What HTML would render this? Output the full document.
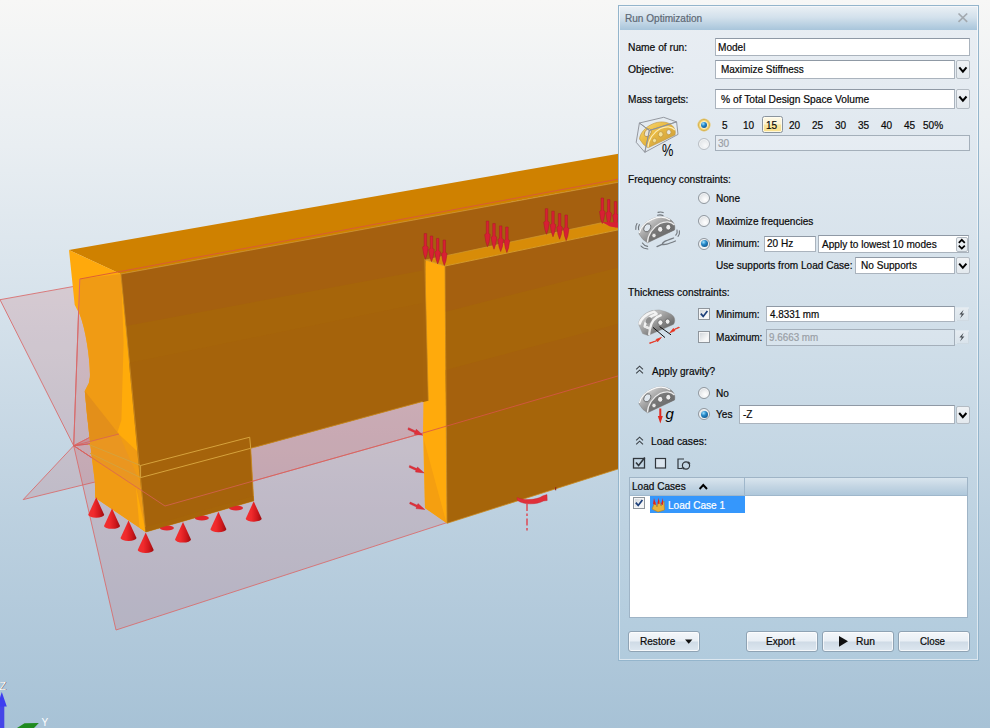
<!DOCTYPE html>
<html><head><meta charset="utf-8"><title>Run Optimization</title>
<style>
html,body{margin:0;padding:0;}
body{width:990px;height:728px;overflow:hidden;position:relative;font-family:"Liberation Sans",sans-serif;font-size:11px;color:#000;background:#a9c3d6;}
#scene{position:absolute;left:0;top:0;width:990px;height:728px;}
#dlg{position:absolute;left:618px;top:5px;width:359px;height:654px;border:1px solid #94b5cc;background:linear-gradient(#e9eef3 0px,#e6ecf2 60px,#d3e0ea 300px,#bdd2e1 520px,#b1cbdd 654px);box-shadow:inset 0 0 0 1px rgba(255,255,255,.55);}
#ttl{position:absolute;left:620px;top:7px;width:357px;height:23px;background:linear-gradient(#e9eff4,#d3e1ec 45%,#a8c5db);}
.t{position:absolute;white-space:nowrap;-webkit-text-stroke:0.22px currentColor;transform:scaleX(.915);transform-origin:0 0;line-height:13px;font-size:11px;color:#0a0a0a;}
.g{color:#9a9fa6;}
.in{position:absolute;box-sizing:border-box;background:#fff;border:1px solid #aab3bd;border-top-color:#8f99a5;}
.dis{background:rgba(255,255,255,.2);border-color:#a4afba;}
.db{position:absolute;box-sizing:border-box;border:1px solid #b3bbc3;border-radius:2px;background:linear-gradient(#eff2f5,#e3e9ee);}
.db svg{position:absolute;left:0;top:0;}
.btn{position:absolute;box-sizing:border-box;height:20.4px;border:1px solid #8fa3b4;border-radius:3px;background:linear-gradient(#f4f7fa 0%,#e9eff5 48%,#cfdbe6 52%,#dde7f0 100%);box-shadow:inset 0 0 0 1px rgba(255,255,255,.7);}
.rd{position:absolute;width:12px;height:12px;border-radius:50%;box-sizing:border-box;border:1px solid #90979e;background:radial-gradient(circle at 62% 66%,#ffffff 0%,#f1f2f3 35%,#cdd1d5 100%);box-shadow:inset 0 0 0 1px rgba(244,246,248,.9);}
.rd.on::after{content:"";position:absolute;left:1.5px;top:1.5px;width:7px;height:7px;border-radius:50%;background:radial-gradient(circle at 36% 30%,#9fe2ff 0%,#2588c8 38%,#0b3f6e 100%);}
.rd.hot{border-color:#d9b145;background:radial-gradient(circle at 50% 50%,#fff 0%,#fff 40%,#f6dc86 58%,#efc956 100%);box-shadow:0 0 0 0.5px #e9c45c;}.rd.hot.on::after{left:2px;top:2px;width:6px;height:6px;}.rd.off{border-color:#b9bec4;background:radial-gradient(circle at 62% 66%,#f8f9fa 0%,#eceef0 40%,#dadde0 100%);}
.cb{position:absolute;width:12px;height:12px;box-sizing:border-box;border:1px solid #8e959c;background:linear-gradient(135deg,#ccd2d7,#f6f7f8 70%);box-shadow:inset 0 0 0 1px #f4f5f6;}
.cb svg{position:absolute;left:0;top:0;}

</style></head><body>
<svg id="scene" width="990" height="728" viewBox="0 0 990 728">
<defs>
<linearGradient id="bg" x1="0" y1="0" x2="0" y2="1">
<stop offset="0" stop-color="#f7f7f6"/><stop offset="0.2" stop-color="#e9eef2"/><stop offset="0.45" stop-color="#d3e0ea"/><stop offset="0.7" stop-color="#bdd1e0"/><stop offset="1" stop-color="#a7c2d6"/>
</linearGradient>
</defs>
<rect width="990" height="728" fill="url(#bg)"/>
<defs>
<linearGradient id="cone" x1="0" y1="0" x2="1" y2="0"><stop offset="0" stop-color="#f03030"/><stop offset="0.35" stop-color="#f02a2c"/><stop offset="0.7" stop-color="#d0181c"/><stop offset="1" stop-color="#9c0c10"/></linearGradient>
<g id="cn"><path d="M0,-0.5 L-8,17 A8,2.9 0 0 0 8,17 Z" fill="url(#cone)"/></g>
<g id="cb"><ellipse cx="0" cy="0" rx="7" ry="2.6" fill="#e0262a"/></g>
<g id="ar"><path d="M-1.25,0 L1.25,0 L1.25,12.5 L2.8,13.5 L1.6,21 L0,25.6 L-1.6,21 L-2.8,13.5 L-1.25,12.5 Z" fill="#d81f34" stroke="#a8182a" stroke-width="0.5"/></g>
<g id="sa"><path d="M0,0 L7,3.2 L7.8,1.6 L14.5,7.5 L5.8,6.6 L6.3,5 L-0.6,1.8 Z" fill="#e0303a" stroke="#c0202a" stroke-width="0.4"/></g>
</defs>
<!-- planes behind the model -->
<g stroke="#d96a6a" stroke-width="1" stroke-opacity="0.85">
<polygon points="0,299.7 300,245.7 300,420 73.7,445.7" fill="rgba(200,60,60,0.15)"/>
<polygon points="79.8,279 300,238.2 300,420 73.7,445.7" fill="rgba(200,60,60,0.10)"/>
<polygon points="73.7,445.7 23.2,499.6 95,482 110,470" fill="rgba(200,60,60,0.15)"/>
<polygon points="73.7,445.7 116,630 640,460 640,300 200,380" fill="rgba(200,70,80,0.17)"/>
<polygon points="73.7,445.7 165,506 640,371.8 640,300 200,380" fill="rgba(210,60,60,0.16)"/>
</g>
<!-- beam 1 -->
<polygon points="68.9,249.9 640,150 640,178.3 120.6,274" fill="#cf8100"/>
<path d="M69,250 L121,274 L145.7,532 L95.2,497.8 L94.9,482 L91.9,457.8 L86.9,413.4 L84.8,391 L88.9,383 L89.9,377 C90.5,362 86,330 79.8,314.8 L74.7,304.7 Z" fill="#ffa90c"/>
<!-- tinted part of end face -->
<path d="M79.8,279 L121,274 L145.7,532 L95.2,497.8 L94.9,482 L91.9,457.8 L86.9,413.4 L84.8,391 L88.9,383 L89.9,377 C90.5,362 86,330 79.8,314.8 L79,300 Z" fill="#f09b14"/>
<polygon points="84.8,391 119.2,434.6 89.9,441.6 86.9,413.4" fill="#e38f1a"/>
<polygon points="89.9,441.6 119.2,434.6 144,492 91.9,457.8" fill="#ea9620"/>
<polygon points="121.6,285 123.6,343 121.4,420 117.5,432 119.2,434.6 138,452 136.3,437 127.5,345 123.2,300" fill="#ffab0a"/>
<polygon points="136,487 145.7,532 139.5,527.8" fill="#ffab0a"/>
<line x1="79.8" y1="279" x2="640" y2="175.1" stroke="#d9583a" stroke-width="0.9"/>
<line x1="79.8" y1="279" x2="73.7" y2="445.7" stroke="#d96a6a" stroke-width="1"/>
<!-- front face beam1 -->
<polygon points="121,274 640,178.3 640,342.3 250.7,448.3 253.7,500.8 145.7,532" fill="#a6650a"/>
<polygon points="121,274 640,178.3 640,230 126,326" fill="#a5600f"/>
<polygon points="129,363 428,302 428,400 250.7,448.3 253.7,500.8 145.7,532 139,470" fill="#a5620c" opacity="0.7"/>
<polyline points="121,274 640,178.3" fill="none" stroke="#cf9630" stroke-width="0.8"/>
<polyline points="121,274 145.7,532 253.7,500.8 250.7,448.3 428,400" fill="none" stroke="#c98a20" stroke-width="0.8"/>
<!-- outline box on leg -->
<g fill="none" stroke="#d6a23c" stroke-width="1">
<polyline points="88,444.2 140.6,465.5 249.7,437.2 250.7,448.3 140.6,477.6 90,453.3"/>
<line x1="140.6" y1="465.5" x2="140.6" y2="477.6"/>
</g>
<!-- red plane lines over leg -->
<g fill="none" stroke="#d9605a" stroke-width="0.9" stroke-opacity="0.85">
<polyline points="73.7,445.7 165,506 423,433"/>
<line x1="73.7" y1="445.7" x2="119" y2="434"/>
</g>
<!-- block 2 -->
<polygon points="425.5,260 601.3,222.8 623,229 445,266" fill="#d88c08"/>
<polygon points="425.5,260 445,266 447,523.3 425,508 423,433" fill="#ffaa0c"/>
<polygon points="424,440 446.5,523 425,508" fill="#f59f10"/>
<polygon points="422.5,255 424.7,255 428.3,400.7 422.5,402.3" fill="#a6640c"/><line x1="424.7" y1="259" x2="428.3" y2="400.7" stroke="#c98a20" stroke-width="0.7"/>
<polygon points="445,266 640,225.3 640,462 447,523.3" fill="#a6650a"/>
<polygon points="445,266 640,225.3 640,262 445,312" fill="#a5600f"/>
<polygon points="445.6,370 640,318 640,369.5 446.2,426.3" fill="#a5610d"/>
<polyline points="425.5,260 445,266 640,225.3" fill="none" stroke="#d9a030" stroke-width="0.9"/><polyline points="425.5,260 601.3,222.8 623,229" fill="none" stroke="#cf9a30" stroke-width="0.7"/>
<polyline points="445,266 447,523.3 640,462" fill="none" stroke="#c98a20" stroke-width="0.8"/>
<line x1="423" y1="433" x2="640" y2="369.5" stroke="#d9544a" stroke-width="0.9" stroke-opacity="0.9"/>
<!-- supports -->
<use href="#cb" x="166.9" y="528"/><use href="#cb" x="201.8" y="518"/><use href="#cb" x="236" y="508"/>
<polygon points="145.7,532 253.7,500.8 253.4,496 145.3,527" fill="#a6650a"/>
<use href="#cn" x="96.2" y="497.8"/><use href="#cn" x="112" y="508.9"/><use href="#cn" x="128.5" y="521"/><use href="#cn" x="145.7" y="533"/>
<use href="#cn" x="183" y="522.6"/><use href="#cn" x="218.4" y="512.3"/><use href="#cn" x="253.7" y="501.8"/>
<!-- load arrows -->
<use href="#ar" x="425.4" y="233.6"/><use href="#ar" x="431.5" y="236"/><use href="#ar" x="437.7" y="238.4"/><use href="#ar" x="444.3" y="240"/>
<use href="#ar" x="487.5" y="221.1"/><use href="#ar" x="494" y="223.6"/><use href="#ar" x="500.7" y="225.9"/><use href="#ar" x="506.9" y="227"/>
<use href="#ar" x="546.5" y="208.7"/><use href="#ar" x="553" y="211.2"/><use href="#ar" x="559.6" y="213.6"/><use href="#ar" x="566.2" y="215"/>
<use href="#ar" x="602.3" y="198"/><use href="#ar" x="608.7" y="199.6"/><use href="#ar" x="615.5" y="201.6"/><use href="#ar" x="621.5" y="203.5"/><path d="M602,222 L619,222.5 L619,228 L610,226.5 Z" fill="#d81f34"/>
<use href="#sa" x="408.5" y="427.7"/><use href="#sa" x="409.7" y="465.4"/><use href="#sa" x="410.2" y="502"/>
<!-- moment -->
<path d="M517,497.5 C524,500.5 536,500.5 543,495.8 L547,494.6 L547.2,500.5 L543.5,501 C536,504.8 524,505 517.5,500.5 Z" fill="#e0303a" stroke="#c8202a" stroke-width="0.4"/>
<line x1="527" y1="504" x2="527" y2="533" stroke="#e0404a" stroke-width="1.4" stroke-dasharray="7,2.5,2.5,2.5"/>
<line x1="555.7" y1="487.3" x2="555.7" y2="490.3" stroke="#8a1414" stroke-width="1"/>
<!-- triad -->
<polygon points="0,705 0,728 4.3,728 4.3,705" fill="#4545e8"/>
<polygon points="1.8,692 -3,706.5 6.8,706.5" fill="#3d3df0"/>
<polygon points="17,728 24.5,723.2 38.8,723 34,728" fill="#1f8a1f"/>
<text x="-0.5" y="689.5" font-family="Liberation Sans, sans-serif" font-size="11" fill="#3a2a2a" transform="translate(0.4,0.6)">Z</text>
<text x="-0.5" y="689.5" font-family="Liberation Sans, sans-serif" font-size="11" fill="#ffffff">Z</text>
<text x="41.5" y="726" font-family="Liberation Sans, sans-serif" font-size="10" fill="#ffffff">Y</text>

</svg>
<div id="dlg"></div><div id="ttl"></div>
<span class="t " style="left:625.2px;top:11.9px;color:#5d6975;">Run Optimization</span>
<svg style="position:absolute;left:957px;top:12px" width="12" height="11"><path d="M1.5,1.5 L10.2,9.8 M10.2,1.5 L1.5,9.8" stroke="#a3a9af" stroke-width="1.7" fill="none"/></svg>
<span class="t " style="left:628.0px;top:40.6px;transform:scaleX(0.93);">Name of run:</span>
<div class="in" style="left:715px;top:38px;width:255.0px;height:17.5px;"></div>
<span class="t " style="left:717.8px;top:40.7px;">Model</span>
<span class="t " style="left:628.0px;top:62.7px;transform:scaleX(0.94);">Objective:</span>
<div class="in" style="left:715px;top:59.6px;width:240.3px;height:19.4px;"></div>
<div class="db" style="left:956.3px;top:59.8px;width:13.7px;height:19.2px;"><svg width="14" height="19"><path d="M2.3,6.4 L5.9,10.6 L9.5,6.4" fill="none" stroke="#000" stroke-width="2" stroke-linejoin="miter"/></svg></div>
<span class="t " style="left:720.7px;top:62.7px;transform:scaleX(0.905);">Maximize Stiffness</span>
<span class="t " style="left:628.0px;top:92.5px;">Mass targets:</span>
<div class="in" style="left:715px;top:89px;width:240.3px;height:19.6px;"></div>
<div class="db" style="left:956.3px;top:89.2px;width:13.7px;height:19.4px;"><svg width="14" height="19"><path d="M2.3,6.5 L5.9,10.7 L9.5,6.5" fill="none" stroke="#000" stroke-width="2" stroke-linejoin="miter"/></svg></div>
<span class="t " style="left:721.2px;top:92.5px;transform:scaleX(0.93);">% of Total Design Space Volume</span>
<div class="rd on hot" style="left:698.0px;top:118.5px"></div>
<div class="rd off" style="left:698.0px;top:137.6px"></div>
<div style="position:absolute;left:761.5px;top:116.3px;width:21.5px;height:16.4px;box-sizing:border-box;border:1px solid #8a949e;border-radius:2.5px;background:linear-gradient(#fdf9e8 0%,#fcf3d2 48%,#fae69e 52%,#f9e08c 100%);box-shadow:inset 0 0 0 1px rgba(255,253,240,.8)"></div>
<span class="t " style="left:722.4px;top:118.9px;">5</span>
<span class="t " style="left:742.6px;top:118.9px;">10</span>
<span class="t " style="left:765.8px;top:118.9px;">15</span>
<span class="t " style="left:788.6px;top:118.9px;">20</span>
<span class="t " style="left:811.9px;top:118.9px;">25</span>
<span class="t " style="left:835.2px;top:118.9px;">30</span>
<span class="t " style="left:858.4px;top:118.9px;">35</span>
<span class="t " style="left:881.4px;top:118.9px;">40</span>
<span class="t " style="left:904.4px;top:118.9px;">45</span>
<span class="t " style="left:923.0px;top:118.9px;">50%</span>
<div class="in dis" style="left:715.4px;top:135.4px;width:254.3px;height:16.1px;"></div>
<span class="t g" style="left:718.2px;top:136.7px;">30</span>
<span class="t " style="left:628.0px;top:172.7px;transform:scaleX(0.924);">Frequency constraints:</span>
<div class="rd" style="left:698.0px;top:192.3px"></div>
<span class="t " style="left:715.8px;top:191.5px;">None</span>
<div class="rd" style="left:698.0px;top:215.3px"></div>
<span class="t " style="left:715.8px;top:214.6px;">Maximize frequencies</span>
<div class="rd on" style="left:698.0px;top:237.5px"></div>
<span class="t " style="left:715.8px;top:237.3px;">Minimum:</span>
<div class="in" style="left:764.4px;top:235.6px;width:51.6px;height:16.6px;"></div>
<span class="t " style="left:767.0px;top:237.3px;">20 Hz</span>
<div class="in" style="left:818.3px;top:235.2px;width:151.1px;height:18.0px;"></div>
<span class="t " style="left:822.0px;top:237.6px;">Apply to lowest 10 modes</span>
<div class="db" style="left:956.2px;top:237px;width:11.6px;height:14.6px;border-radius:2px"><svg width="10" height="13"><path d="M1.8,4.8 L4.8,1.8 L7.8,4.8 M1.8,7.6 L4.8,10.6 L7.8,7.6" fill="none" stroke="#000" stroke-width="1.7"/></svg></div>
<span class="t " style="left:715.8px;top:259.4px;">Use supports from Load Case:</span>
<div class="in" style="left:855.4px;top:256.5px;width:99.6px;height:17.8px;"></div>
<div class="db" style="left:956.2px;top:256.6px;width:13.6px;height:17.7px;"><svg width="14" height="18"><path d="M2.2,5.6 L5.8,9.8 L9.4,5.6" fill="none" stroke="#000" stroke-width="2" stroke-linejoin="miter"/></svg></div>
<span class="t " style="left:860.7px;top:258.9px;">No Supports</span>
<span class="t " style="left:628.0px;top:286.0px;transform:scaleX(0.934);">Thickness constraints:</span>
<div class="cb" style="left:698px;top:308px"><svg width="10" height="10"><path d="M1.8,4.6 L4.2,7.4 L8.4,2" fill="none" stroke="#1c3f7a" stroke-width="1.7"/></svg></div>
<span class="t " style="left:715.8px;top:308.3px;">Minimum:</span>
<div class="in" style="left:766px;top:306.3px;width:188.6px;height:16.1px;"></div>
<span class="t " style="left:769.5px;top:308.3px;transform:scaleX(0.895);">4.8331 mm</span>
<div class="cb" style="left:698px;top:331px"></div>
<span class="t " style="left:715.8px;top:331.0px;">Maximum:</span>
<div class="in dis" style="left:766px;top:329.3px;width:188.6px;height:16.7px;"></div>
<span class="t g" style="left:769.3px;top:331.0px;transform:scaleX(0.895);">9.6663 mm</span>
<div style="position:absolute;left:956.4px;top:308.4px;width:12px;height:12px;background:linear-gradient(#e6ecf1,#d9e3eb);box-shadow:0 0 0 1px rgba(255,255,255,.3),1px 1px 0 0 rgba(150,165,180,.35)"><svg style="position:absolute;left:0;top:0" width="12" height="12"><path d="M7.6,1.8 L3.4,6.6 L5.8,6.6 L4,10.6 L8.4,5.4 L6,5.4 Z" fill="#474c52"/></svg></div>
<div style="position:absolute;left:956.4px;top:331.4px;width:12px;height:12px;background:linear-gradient(#e6ecf1,#d9e3eb);box-shadow:0 0 0 1px rgba(255,255,255,.3),1px 1px 0 0 rgba(150,165,180,.35)"><svg style="position:absolute;left:0;top:0" width="12" height="12"><path d="M7.6,1.8 L3.4,6.6 L5.8,6.6 L4,10.6 L8.4,5.4 L6,5.4 Z" fill="#474c52"/></svg></div>
<svg style="position:absolute;left:635.4px;top:365px" width="10" height="10"><path d="M1.2,4.4 L4.6,1.2 L8,4.4 M1.2,8.4 L4.6,5.2 L8,8.4" fill="none" stroke="#3c4248" stroke-width="1.1"/></svg>
<span class="t " style="left:651.6px;top:364.6px;">Apply gravity?</span>
<div class="rd" style="left:698.0px;top:386.9px"></div>
<span class="t " style="left:715.8px;top:386.7px;">No</span>
<div class="rd on" style="left:698.0px;top:408.0px"></div>
<span class="t " style="left:715.8px;top:407.9px;">Yes</span>
<div class="in" style="left:738.5px;top:405.4px;width:216.7px;height:18.4px;"></div>
<div class="db" style="left:956.2px;top:405.5px;width:13.6px;height:18.3px;"><svg width="14" height="18"><path d="M2.2,6.0 L5.8,10.2 L9.4,6.0" fill="none" stroke="#000" stroke-width="2" stroke-linejoin="miter"/></svg></div>
<span class="t " style="left:743.3px;top:407.9px;">-Z</span>
<svg style="position:absolute;left:635.4px;top:436.3px" width="10" height="10"><path d="M1.2,4.4 L4.6,1.2 L8,4.4 M1.2,8.4 L4.6,5.2 L8,8.4" fill="none" stroke="#3c4248" stroke-width="1.1"/></svg>
<span class="t " style="left:651.3px;top:435.4px;transform:scaleX(0.94);">Load cases:</span>
<svg style="position:absolute;left:632px;top:456px" width="62" height="16"><rect x="1.5" y="2.5" width="11" height="9.5" fill="none" stroke="#30363c" stroke-width="1.3"/><path d="M4,6.5 L6.6,9.6 L12.8,1.6" fill="none" stroke="#30363c" stroke-width="1.6"/><rect x="23.5" y="2.5" width="10" height="9.5" fill="#dbe5ee" stroke="#30363c" stroke-width="1.2"/><path d="M52,3 L46,3 L46,12.5 L50,12.5" fill="none" stroke="#30363c" stroke-width="1.2"/><circle cx="54" cy="9.5" r="3.6" fill="none" stroke="#30363c" stroke-width="1.2"/><path d="M56.5,5.2 L58.6,7.4 L55.6,7.8 Z M51.4,13.8 L49.4,11.6 L52.4,11.2 Z" fill="#30363c"/></svg>
<div class="in" style="left:629.2px;top:476.7px;width:339.3px;height:141.6px;border-color:#9fb4c6;"></div>
<div style="position:absolute;left:630.2px;top:477.7px;width:337.3px;height:18px;background:linear-gradient(#d9e5ee,#c3d5e3 50%,#afc8db);border-bottom:1px solid #9fb7cb;box-sizing:border-box"></div>
<div style="position:absolute;left:744px;top:477.7px;width:1px;height:18px;background:#9fb7cb"></div>
<span class="t " style="left:632.0px;top:480.2px;">Load Cases</span>
<svg style="position:absolute;left:698px;top:483px" width="11" height="8"><path d="M1.6,6 L5.3,2 L9,6" fill="none" stroke="#000" stroke-width="1.9"/></svg>
<div style="position:absolute;left:650px;top:496.2px;width:95px;height:17.2px;background:#3597fc"></div>
<div class="cb" style="left:633.3px;top:497.3px"><svg width="10" height="10"><path d="M1.8,4.6 L4.2,7.4 L8.4,2" fill="none" stroke="#1c3f7a" stroke-width="1.7"/></svg></div>
<svg style="position:absolute;left:651px;top:497px" width="15" height="16"><path d="M1,12 L4,5 L6,10 L8,3 L10,9 L13,4 L13.5,13 L7,15 Z" fill="#e8b23a" stroke="#b98218" stroke-width="0.6"/><path d="M3,1 L5,8 L2,7 Z M7.5,0.5 L8.5,7 L6.5,6.5 Z M12,1 L12,8 L10,7 Z" fill="#e02020"/></svg>
<span class="t " style="left:667.5px;top:498.5px;color:#fff;">Load Case 1</span>
<div class="btn" style="left:628.1px;top:631.3px;width:71.6px"></div>
<div class="btn" style="left:746.3px;top:631.3px;width:71.4px"></div>
<div class="btn" style="left:822.4px;top:631.3px;width:71.3px"></div>
<div class="btn" style="left:898.3px;top:631.3px;width:71.3px"></div>
<span class="t " style="left:639.6px;top:635.3px;">Restore</span>
<span class="t " style="left:766.4px;top:635.3px;">Export</span>
<span class="t " style="left:855.8px;top:635.3px;transform:scaleX(0.935);">Run</span>
<span class="t " style="left:920.1px;top:635.3px;transform:scaleX(0.89);">Close</span>
<svg style="position:absolute;left:684px;top:638px" width="10" height="7"><path d="M1,1.5 L8.4,1.5 L4.7,5.8 Z" fill="#111"/></svg>
<svg style="position:absolute;left:838px;top:635px" width="12" height="13"><path d="M1,1 L10,6.3 L1,11.7 Z" fill="#111"/></svg>
<svg style="position:absolute;left:0;top:0;pointer-events:none" width="990" height="728" viewBox="0 0 990 728">
<defs>
<linearGradient id="mt" x1="0" y1="0" x2="1" y2="1"><stop offset="0" stop-color="#f0f0f0"/><stop offset="0.35" stop-color="#b0b0b0"/><stop offset="0.7" stop-color="#747474"/><stop offset="1" stop-color="#505050"/></linearGradient>
<linearGradient id="mt2" x1="0" y1="0" x2="0" y2="1"><stop offset="0" stop-color="#8a8a8a"/><stop offset="1" stop-color="#d9d9d9"/></linearGradient>
<linearGradient id="gd" x1="0" y1="0" x2="1" y2="1"><stop offset="0" stop-color="#fbdc6a"/><stop offset="0.4" stop-color="#eaae18"/><stop offset="1" stop-color="#b97d08"/></linearGradient>
<g id="brk">
<path d="M11,26 C11.5,20 17,14 24,11 C30,8.2 38,8 43,12 C46,14.5 47.5,18 46.5,22 L19.5,34.8 L15,31.5 Z" fill="url(#mt)" stroke="#7a7a7a" stroke-width="0.5"/>
<path d="M19.5,34.6 C19.5,27 25,19 32,15.5 C37,13 43,13 46.5,17 L46.5,22 Z" fill="#6f6f6f" opacity="0.75"/><path d="M11.4,25 C12,20 17,14.3 24,11.4 C30,8.7 37,8.6 42,12" fill="none" stroke="#f8f8f8" stroke-width="1.2"/>
<path d="M19.5,34.5 C19.5,27 25,19 32,15.5 C37,13 43,13 46.5,17" fill="none" stroke="#ededed" stroke-width="1.3"/>
<ellipse cx="19.3" cy="19.8" rx="3.1" ry="4.3" transform="rotate(28 19.3 19.8)" fill="#dfe7ee" stroke="#5c5c5c" stroke-width="0.8"/>
<ellipse cx="32.2" cy="21.3" rx="2.7" ry="3" fill="#efefef" stroke="#5f5f5f" stroke-width="0.9"/>
<ellipse cx="40.3" cy="19.2" rx="2.6" ry="2.9" fill="#ececec" stroke="#5f5f5f" stroke-width="0.9"/>
<ellipse cx="26" cy="27.5" rx="2.2" ry="2.4" fill="#e6e6e6" stroke="#666" stroke-width="0.8"/>
</g>
</defs>
<!-- mass icon -->
<g transform="translate(628,108)">
<g transform="translate(0.5,5)"><g>
<path d="M11,26 C11.5,20 17,14 24,11 C30,8.2 38,8 43,12 C46,14.5 47.5,18 46.5,22 L19.5,34.8 L15,31.5 Z" fill="url(#gd)" stroke="#b07a10" stroke-width="0.6"/>
<path d="M19.5,34.5 C19.5,27 25,19 32,15.5 C37,13 43,13 46.5,17" fill="none" stroke="#ffe9a0" stroke-width="1.2"/>
<ellipse cx="19.3" cy="19.8" rx="3" ry="4.2" transform="rotate(28 19.3 19.8)" fill="#e8e2cf" stroke="#a87412" stroke-width="0.8"/>
<ellipse cx="32.2" cy="21.3" rx="2.4" ry="2.7" fill="#f6dc80" stroke="#b27c12" stroke-width="0.8"/>
<ellipse cx="40.3" cy="19.2" rx="2.3" ry="2.6" fill="#e9e4d6" stroke="#b27c12" stroke-width="0.8"/>
<ellipse cx="26" cy="27.5" rx="2" ry="2.2" fill="#f6dc80" stroke="#b27c12" stroke-width="0.7"/>
</g></g>
<g fill="rgba(240,243,246,0.2)" stroke="#8b8f96" stroke-width="0.9" stroke-linejoin="round">
<polygon points="11.4,15 35.7,9.3 48.6,13.9 21.4,22.5"/>
<polygon points="11.4,15 21.4,22.5 16.8,44.3 8.2,34.3"/>
<polygon points="21.4,22.5 48.6,13.9 50,26.4 16.8,44.3"/>
</g>
<text transform="translate(34,47.8) scale(0.8,1)" font-family="Liberation Sans, sans-serif" font-size="16" fill="#000">%</text>
</g>
<!-- frequency icon -->
<g transform="translate(628,208)"><use href="#brk"/>
<g fill="none" stroke="#70767c" stroke-width="1.1" stroke-linecap="round">
<path d="M29.5,7.2 C31.5,6.6 33.5,6.8 35,7.6 M30,4.4 C32,3.8 34,4 35.2,4.6"/>
<path d="M9,15.5 C7.8,17.4 7.4,19.4 7.8,21.4 M11.4,16.6 C10.4,18.2 10.2,20 10.6,21.6"/>
<path d="M49,22 C49.5,23.6 49,25.6 47.8,27.2 M51.4,22.8 C51.8,24.6 51.2,26.8 50,28.4"/>
<path d="M14.4,35 C15.6,37 17.6,38 19.6,38.4 M13,38 C14.6,40 17,40.8 19.8,41"/>
</g>
<g fill="none" stroke="#777d83" stroke-width="1.3" stroke-linecap="round"><path d="M29,38.6 L34,36.4 M34,36.4 C35,33.6 37,33 45.6,30 M34,36.4 C37.5,36.8 39,36.4 47.4,33"/></g>
</g>
<!-- thickness icon -->
<g transform="translate(628,300)">
<path d="M10.5,24 C11,18 17,12.6 24,10.6 L31,10 C36,11 43,13 45.6,16.4 C47.4,19 47,22.6 45.4,24.4 L20,35.6 L14.6,33.6 Z" fill="url(#mt)" stroke="#8a8a8a" stroke-width="0.4"/>
<path d="M11.4,24.6 C12.4,19 18,13.6 26,11.6 L28.6,14 C22,16 17.6,20 16.6,26.4 L22,28.6 C23,22 27,17 33.6,14.8" fill="none" stroke="#f3f3f3" stroke-width="2.4" stroke-linejoin="round"/>
<path d="M16.6,26.4 L22,28.6 L21,35" fill="none" stroke="#e8e8e8" stroke-width="2.2"/>
<ellipse cx="20.6" cy="20.4" rx="2.6" ry="3.6" transform="rotate(35 20.6 20.4)" fill="#8e8e8e"/>
<ellipse cx="32.4" cy="22.6" rx="2.6" ry="2.8" fill="#f2f2f2" stroke="#6a6a6a" stroke-width="0.9"/>
<ellipse cx="39.6" cy="21.6" rx="2.4" ry="2.7" fill="#ededed" stroke="#6a6a6a" stroke-width="0.9"/>
<path d="M25,27.4 L37,37.6 M31.6,26.6 L43,34.8" stroke="#111" stroke-width="1" fill="none"/>
<path d="M21.4,43 L28.6,40.6 L28.2,39.4 L33.4,37.4 L29.6,41.8 L29.2,40.6 L22,43.4 Z" fill="#e8301c" stroke="#e8301c" stroke-width="0.7"/>
<path d="M51.4,27.6 L46.4,29.6 L46.8,30.8 L41.8,32.8 L45.4,28.4 L45.8,29.6 L51,27 Z" fill="#e8301c" stroke="#e8301c" stroke-width="0.7"/>
</g>
<!-- gravity icon -->
<g transform="translate(628,378)"><use href="#brk"/>
<path d="M31.3,30.4 L33.3,30.4 L33.3,38 L34.8,38 L32.3,45.6 L29.8,38 L31.3,38 Z" fill="#e02a20"/>
<text x="37.6" y="41.2" font-family="Liberation Sans, sans-serif" font-style="italic" font-size="15" fill="#000">g</text>
</g>
</svg>

</body></html>
